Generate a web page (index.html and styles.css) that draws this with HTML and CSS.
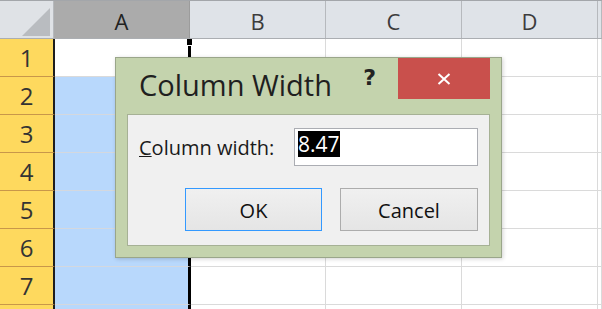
FILE: index.html
```html
<!DOCTYPE html>
<html>
<head>
<meta charset="utf-8">
<title>Column Width</title>
<link rel="stylesheet" href="styles.css">
</head>
<body>
<div class="sheet">
  <div class="hdr">
    <div class="corner"><span class="tri"></span></div>
    <div class="ch sel">A</div>
    <div class="ch">B</div>
    <div class="ch">C</div>
    <div class="ch">D</div>
    <div class="ch"></div>
  </div>
  <div class="row"><div class="rh">1</div><div class="ca active"></div><div class="c"></div><div class="c"></div><div class="c"></div><div class="c"></div></div>
  <div class="row"><div class="rh">2</div><div class="ca"></div><div class="c"></div><div class="c"></div><div class="c"></div><div class="c"></div></div>
  <div class="row"><div class="rh">3</div><div class="ca"></div><div class="c"></div><div class="c"></div><div class="c"></div><div class="c"></div></div>
  <div class="row"><div class="rh">4</div><div class="ca"></div><div class="c"></div><div class="c"></div><div class="c"></div><div class="c"></div></div>
  <div class="row"><div class="rh">5</div><div class="ca"></div><div class="c"></div><div class="c"></div><div class="c"></div><div class="c"></div></div>
  <div class="row"><div class="rh">6</div><div class="ca"></div><div class="c"></div><div class="c"></div><div class="c"></div><div class="c"></div></div>
  <div class="row"><div class="rh">7</div><div class="ca"></div><div class="c"></div><div class="c"></div><div class="c"></div><div class="c"></div></div>
  <div class="row"><div class="rh"></div><div class="ca"></div><div class="c"></div><div class="c"></div><div class="c"></div><div class="c"></div></div>
</div>

<div class="dlg">
  <div class="tbar">
    <div class="title">Column Width</div>
    <div class="help">?</div>
    <div class="close">
      <svg width="14" height="12" viewBox="0 0 14 12"><path d="M1.5 1 L12.5 11 M12.5 1 L1.5 11" stroke="#fff" stroke-width="2" fill="none"/></svg>
    </div>
  </div>
  <div class="panel">
    <div class="field">
      <div class="label"><u>C</u>olumn width:</div>
      <div class="input"><span class="seltext">8.47</span></div>
    </div>
    <div class="buttons">
      <div class="btn def">OK</div>
      <div class="btn cancel">Cancel</div>
    </div>
  </div>
</div>
</body>
</html>
```

FILE: styles.css
```css
html, body {
  margin: 0;
  padding: 0;
}
body {
  width: 602px;
  height: 309px;
  overflow: hidden;
  position: relative;
  background: #fff;
  font-family: "Open Sans", "Noto Sans", sans-serif;
}
.sheet {
  display: flex;
  flex-direction: column;
}
.hdr {
  display: grid;
  grid-template-columns: 54px 136px 136px 136px 136px 1fr;
  height: 39px;
  box-sizing: border-box;
  border-top: 1px solid #a3a6aa;
  border-bottom: 1px solid #abaeb2;
  background: #dfe3e8;
  flex: none;
}
.hdr > div {
  box-sizing: border-box;
  border-right: 1px solid #b6b9bd;
  text-align: center;
  font-size: 22px;
  line-height: 34px;
  padding-top: 3px;
  color: #3c3c3c;
}
.corner {
  position: relative;
  background: #dfe2e6;
}
.tri {
  position: absolute;
  right: 3px;
  bottom: 2px;
  width: 28px;
  height: 28px;
  background: #b9bcc0;
  clip-path: polygon(100% 0, 100% 100%, 0 100%);
}
.hdr > .sel {
  background: #ababab;
  color: #222;
  border-right-color: #9c9c9c;
}
.row {
  display: grid;
  grid-template-columns: 55px 136px 135px 136px 136px 1fr;
  height: 38px;
  flex: none;
}
.row > div {
  box-sizing: border-box;
  border-bottom: 1px solid #dadada;
}
.row > .rh {
  background: #fed95e;
  border-right: 2px solid #1e1e1e;
  border-bottom-color: #c8974a;
  text-align: center;
  font-size: 24px;
  line-height: 36px;
  padding-top: 1px;
  color: #333;
}
.row > .ca {
  background: #b8d8fc;
  border-right: 3px solid #000;
  border-bottom-color: #d4d8de;
}
.row > .ca.active {
  background: #fff;
  position: relative;
  border-bottom-color: #dadada;
}
.ca.active::after {
  content: "";
  position: absolute;
  right: -4px;
  top: 0;
  width: 5px;
  height: 6px;
  background: #000;
}
.ca.active::before {
  content: "";
  position: absolute;
  right: -3px;
  top: 6px;
  width: 3px;
  height: 1px;
  background: #fff;
}
.row > .c {
  border-right: 1px solid #dadada;
}

/* dialog */
.dlg {
  position: absolute;
  left: 115px;
  top: 57px;
  width: 387px;
  height: 201px;
  box-sizing: border-box;
  border: 1px solid #9aa68a;
  background: #c4d3ad;
  box-shadow: 1px 1px 4px rgba(0, 0, 0, 0.18);
  display: flex;
  flex-direction: column;
  padding: 0 11px 11px;
}
.tbar {
  display: flex;
  align-items: flex-start;
  height: 56px;
  flex: none;
}
.title {
  flex: 1;
  margin: 12px 0 0 12px;
  font-size: 29px;
  line-height: 30px;
  color: #1f1f1f;
  white-space: nowrap;
}
.help {
  margin: 9px 22px 0 0;
  font: bold 22px/22px "DejaVu Sans", sans-serif;
  color: #222;
}
.close {
  width: 92px;
  height: 41px;
  background: #c9504c;
  display: flex;
  align-items: center;
  justify-content: center;
}
.close svg {
  display: block;
}
.panel {
  flex: 1;
  background: #f0f0f0;
  border: 1px solid #a6b195;
  padding: 13px 11px 14px 11px;
  display: flex;
  flex-direction: column;
  justify-content: space-between;
}
.field {
  display: flex;
  align-items: center;
  justify-content: space-between;
}
.label {
  font-size: 20px;
  color: #1a1a1a;
}
.label u {
  text-decoration-thickness: 1px;
}
.input {
  width: 184px;
  height: 38px;
  box-sizing: border-box;
  border: 1px solid #abadb3;
  background: #fff;
  padding: 2px 3px;
}
.seltext {
  display: inline-block;
  background: #000;
  color: #fff;
  font-size: 21px;
  line-height: 26px;
  height: 26px;
  vertical-align: top;
}
.buttons {
  display: flex;
  justify-content: flex-end;
  gap: 18px;
}
.btn {
  width: 137px;
  height: 43px;
  box-sizing: border-box;
  border: 1px solid #acacac;
  background: linear-gradient(#f0f0f0, #e5e5e5);
  font-size: 20px;
  padding-top: 1px;
  display: flex;
  align-items: center;
  justify-content: center;
  color: #111;
}
.btn.def {
  border-color: #3399ff;
}
.btn.cancel {
  width: 138px;
}
```
